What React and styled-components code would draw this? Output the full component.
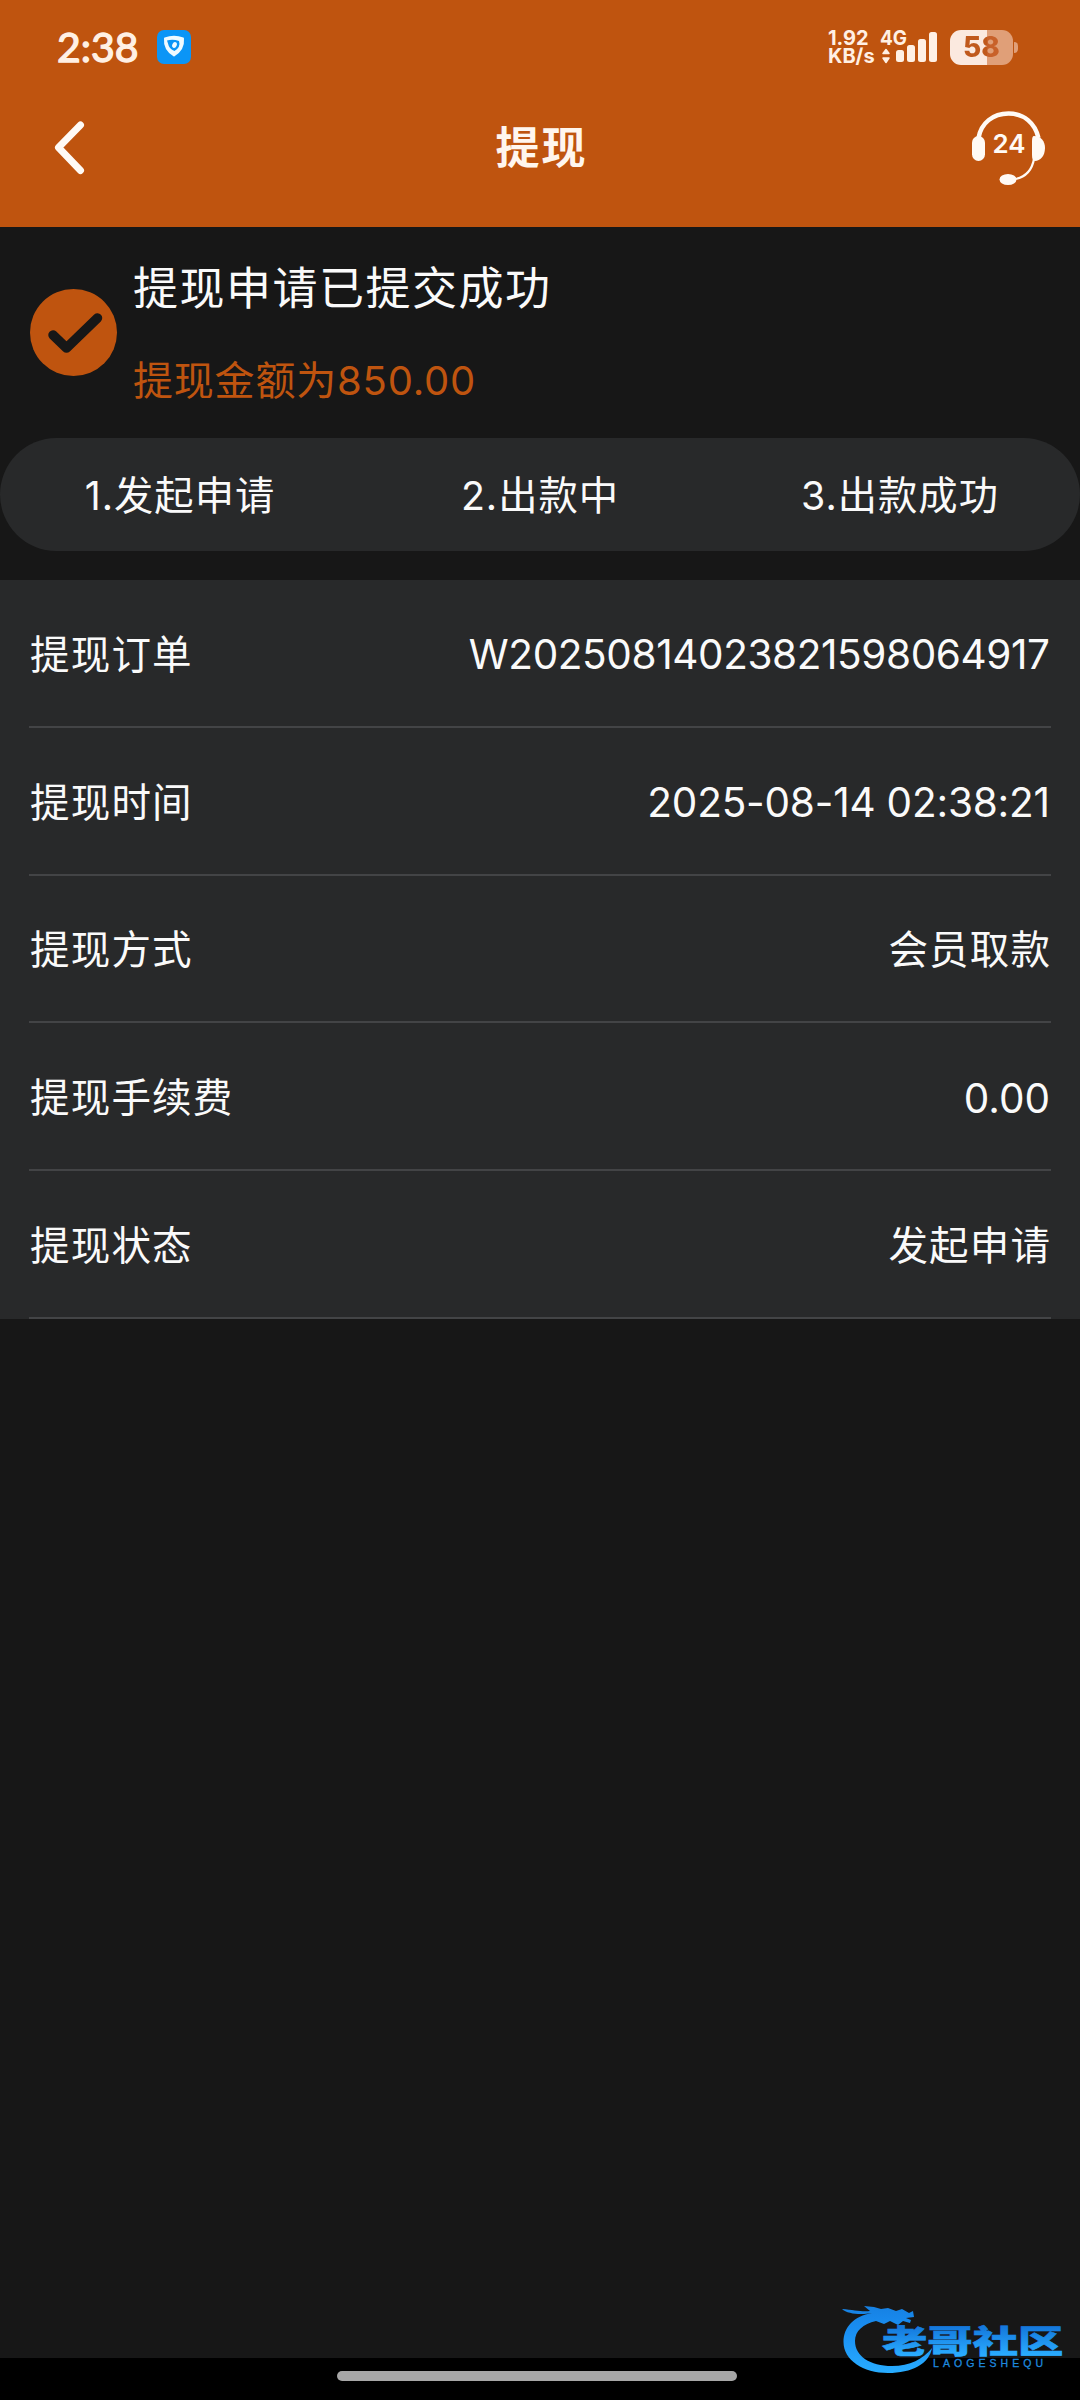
import React from "react";
import styled, { createGlobalStyle } from "styled-components";

const ORANGE = "#bf540f";
const CREAM = "#fff0e4";

const GlobalStyle = createGlobalStyle`
  *, *::before, *::after { box-sizing: border-box; }
  body {
    margin: 0;
    background: #171717;
    color: #fafafa;
    font-family: Inter, "Noto Sans CJK SC", sans-serif;
    -webkit-font-smoothing: antialiased;
  }
`;

const Screen = styled.div`
  position: relative;
  width: 1080px;
  height: 2400px;
  display: flex;
  flex-direction: column;
  background: #171717;
  overflow: hidden;
`;

const Header = styled.header`
  height: 227px;
  background: ${ORANGE};
`;

const StatusBar = styled.div`
  height: 94px;
  padding: 0 62px 0 57px;
  display: flex;
  align-items: center;
  justify-content: space-between;
  color: ${CREAM};
`;

const StatusGroup = styled.div`
  display: flex;
  align-items: center;
`;

const Clock = styled.span`
  width: 100px;
  font-family: Lato, sans-serif;
  font-size: 41px;
  line-height: 48px;
  font-weight: 400;
  -webkit-text-stroke: 1.3px ${CREAM};
`;

const NetSpeed = styled.span`
  width: 52px;
  display: flex;
  flex-direction: column;
  font-size: 20px;
  line-height: 18.5px;
  font-weight: 700;
  white-space: nowrap;
`;

const Signal = styled.svg`
  width: 60px;
  height: 36px;
  margin-right: 10px;
  overflow: visible;
`;

const Battery = styled.div`
  width: 63px;
  height: 35px;
  border-radius: 11px;
  background: linear-gradient(90deg, #fbe9df 58%, #e09f78 58%);
  display: flex;
  align-items: center;
  justify-content: center;
`;

const BatteryLevel = styled.span`
  font-size: 28px;
  line-height: 35px;
  font-weight: 800;
  background: linear-gradient(90deg, #c0591c 64%, #c8612a 64%);
  background-clip: text;
  color: transparent;
`;

const BatteryTip = styled.i`
  width: 4px;
  height: 11px;
  margin-left: 1px;
  border-radius: 0 5px 5px 0;
  background: #e09f78;
`;

const NavBar = styled.div`
  height: 108px;
  display: grid;
  grid-template-columns: 160px 1fr 160px;
  align-items: center;
`;

const BackIcon = styled.svg`
  width: 40px;
  height: 56px;
  margin-left: 50px;
`;

const Title = styled.h1`
  margin: 0;
  padding-left: 3px;
  text-align: center;
  font-size: 44px;
  line-height: 64px;
  font-weight: 700;
  letter-spacing: 2px;
  color: #fff6ee;
`;

const SupportIcon = styled.svg`
  width: 80px;
  height: 80px;
  margin-left: 48px;
`;

const Result = styled.section`
  height: 211px;
  padding-left: 30px;
  display: flex;
  align-items: center;
  gap: 15px;
`;

const CheckIcon = styled.svg`
  width: 88px;
  height: 88px;
`;

const ResultText = styled.div`
  padding-top: 5px;
  display: flex;
  flex-direction: column;
  gap: 32px;
`;

const ResultHeading = styled.div`
  font-size: 45px;
  line-height: 60px;
  letter-spacing: 1.5px;
`;

const ResultAmount = styled.div`
  font-size: 40px;
  line-height: 60px;
  letter-spacing: 0.8px;
  color: ${ORANGE};
`;

const Steps = styled.ol`
  height: 113px;
  margin: 0 0 29px;
  padding: 0;
  display: flex;
  list-style: none;
  border-radius: 57px;
  background: #28292a;
`;

const Step = styled.li`
  flex: 1;
  text-align: center;
  font-size: 39.3px;
  line-height: 115px;
  letter-spacing: 1px;
`;

const Details = styled.dl`
  margin: 0;
  padding: 0 29px;
  background: #28292a;
`;

const Row = styled.div`
  height: 147.8px;
  padding: 0 1px;
  display: flex;
  align-items: center;
  justify-content: space-between;
  border-bottom: 2px solid #434446;
`;

const Label = styled.dt`
  padding-bottom: 3px;
  font-size: 39.5px;
  letter-spacing: 1.2px;
`;

const Value = styled.dd`
  margin: 0;
  padding-top: ${(p) => (p.$numeric ? 4 : 0)}px;
  padding-bottom: ${(p) => (p.$numeric ? 0 : 3)}px;
  font-size: ${(p) => (p.$numeric ? 40.5 : 39.5)}px;
  letter-spacing: ${(p) => p.$spacing}px;
  margin-right: ${(p) => -p.$spacing}px;
`;

const GestureBar = styled.footer`
  height: 42px;
  margin-top: auto;
  display: flex;
  justify-content: center;
  align-items: center;
  background: #000;
`;

const GesturePill = styled.span`
  width: 400px;
  height: 10px;
  margin: -6px 6px 0 0;
  border-radius: 5px;
  background: #a7a7a7;
`;

const Watermark = styled.svg`
  position: absolute;
  right: 0;
  bottom: 0;
  width: 260px;
  height: 120px;
`;

const steps = ["1.发起申请", "2.出款中", "3.出款成功"];

const rows = [
  { label: "提现订单", value: "W20250814023821598064917", spacing: -0.4, numeric: true },
  { label: "提现时间", value: "2025-08-14 02:38:21", spacing: -0.2, numeric: true },
  { label: "提现方式", value: "会员取款", spacing: 1.2 },
  { label: "提现手续费", value: "0.00", spacing: 0, numeric: true },
  { label: "提现状态", value: "发起申请", spacing: 1.2 },
];

function ShieldBadge() {
  return (
    <svg width="34" height="34" viewBox="0 0 34 34">
      <rect width="34" height="34" rx="7" fill="#0b95f6" />
      <path d="M8 8.5 Q17 5 26 8.5 Q27 19 17 25.5 Q7 19 8 8.5Z" fill="#effaff" stroke="#effaff" strokeWidth="2" strokeLinejoin="round" />
      <path d="M10 10.5 Q16 9 22 11 Q24 17 17.500 21 Q12 19 11 13.500Z" fill="#0b95f6" />
      <ellipse cx="17.500" cy="15" rx="2.200" ry="3" fill="#effaff" transform="rotate(25 17.500 15)" />
    </svg>
  );
}

function SignalBars() {
  return (
    <Signal viewBox="0 0 60 36" fill={CREAM}>
      <text x="0" y="16" fontSize="20" fontWeight="700" textLength="27" lengthAdjust="spacingAndGlyphs">4G</text>
      <path d="M3 24.500 L6 20.500 L9 24.500Z M3 29 H9 L6 33.500Z" stroke={CREAM} strokeWidth="1.500" strokeLinejoin="round" />
      <rect x="16" y="21" width="8" height="12" rx="2.500" />
      <rect x="27" y="16" width="8" height="17" rx="2.500" />
      <rect x="38" y="10" width="8" height="23" rx="2.500" />
      <rect x="49" y="3" width="8" height="30" rx="2.500" />
    </Signal>
  );
}

function Headset() {
  return (
    <SupportIcon viewBox="0 0 80 80" fill="#fffaf5">
      <path d="M10.500 30 C13 15 25 5.500 40.500 5.500 C56 5.500 67 15 70.500 30" fill="none" stroke="#fffaf5" strokeWidth="4.500" />
      <rect x="4" y="28" width="13" height="25" rx="6.500" />
      <path d="M66 28 C73 28 77 33 77 40 C77 48 72 53 67 53 C65 53 64 51 64 47 V33 C64 30 64.500 28 66 28Z" />
      <path d="M66 51 C64 62 58 69 47 71" fill="none" stroke="#fffaf5" strokeWidth="2.200" />
      <ellipse cx="40" cy="71.500" rx="8.500" ry="5.500" />
      <text x="24.500" y="45" fontSize="25.500" fontWeight="600" textLength="33" lengthAdjust="spacingAndGlyphs">24</text>
    </SupportIcon>
  );
}

function DragonLogo() {
  return (
    <Watermark viewBox="0 0 260 120">
      <defs>
        <linearGradient id="blue" gradientUnits="userSpaceOnUse" x1="0" y1="25" x2="0" y2="93">
          <stop offset="0" stopColor="#1680e2" />
          <stop offset="0.400" stopColor="#1a90f4" />
          <stop offset="1" stopColor="#28acff" />
        </linearGradient>
        <linearGradient id="word" gradientUnits="userSpaceOnUse" x1="0" y1="-26" x2="0" y2="2">
          <stop offset="0" stopColor="#1478dc" />
          <stop offset="1" stopColor="#2aacff" />
        </linearGradient>
      </defs>
      <path
        fill="url(#blue)"
        d="M52 33 C34 36 23.500 47 23.500 62 C23.500 80 43 93 68 93 C92 93 109 84 112 68 C103 79 90 86 72 86 C50 86 35 76 35 61 C35 51 43 44 56 41 L64 44 L70 41 L78 45 L83 41 L90 43 L91 40 L86 38 L94 37 L93 31 L89 33 L82 29 L76 31 L68 28 L61 29 L54 27 L44 26 L50 31 C42 32 34 30 22 29 C26 33 36 34.500 44 34Z"
      />
      <text transform="translate(62 73) scale(1.440 1)" fontSize="31.500" fontWeight="900" fontFamily="Noto Sans CJK SC, sans-serif" fill="url(#word)" stroke="url(#word)" strokeWidth="0.600">老哥社区</text>
      <text x="113" y="86.500" fontSize="10.500" fontFamily="Liberation Sans, sans-serif" fill="#1e88de" stroke="#1e88de" strokeWidth="0.300" textLength="110">LAOGESHEQU</text>
    </Watermark>
  );
}

export default function App() {
  return (
    <>
      <GlobalStyle />
      <Screen>
        <Header>
          <StatusBar>
            <StatusGroup>
              <Clock>2:38</Clock>
              <ShieldBadge />
            </StatusGroup>
            <StatusGroup>
              <NetSpeed>
                <span>1.92</span>
                <span>KB/s</span>
              </NetSpeed>
              <SignalBars />
              <Battery>
                <BatteryLevel>58</BatteryLevel>
              </Battery>
              <BatteryTip />
            </StatusGroup>
          </StatusBar>
          <NavBar>
            <BackIcon viewBox="0 0 40 56" fill="none">
              <path d="M30.500 5 L8.500 27.500 L30.500 50.500" stroke="#fffaf5" strokeWidth="7" strokeLinecap="round" strokeLinejoin="round" />
            </BackIcon>
            <Title>提现</Title>
            <Headset />
          </NavBar>
        </Header>
        <Result>
          <CheckIcon viewBox="0 0 88 88" fill="none">
            <circle cx="43.500" cy="43.500" r="43.500" fill={ORANGE} />
            <path d="M23 46 L36.500 59 L67.500 29" stroke="#171717" strokeWidth="9.500" strokeLinecap="round" strokeLinejoin="round" />
          </CheckIcon>
          <ResultText>
            <ResultHeading>提现申请已提交成功</ResultHeading>
            <ResultAmount>提现金额为850.00</ResultAmount>
          </ResultText>
        </Result>
        <Steps>
          {steps.map((s) => (
            <Step key={s}>{s}</Step>
          ))}
        </Steps>
        <Details>
          {rows.map((r) => (
            <Row key={r.label}>
              <Label>{r.label}</Label>
              <Value $spacing={r.spacing} $numeric={r.numeric}>{r.value}</Value>
            </Row>
          ))}
        </Details>
        <GestureBar>
          <GesturePill />
        </GestureBar>
        <DragonLogo />
      </Screen>
    </>
  );
}
